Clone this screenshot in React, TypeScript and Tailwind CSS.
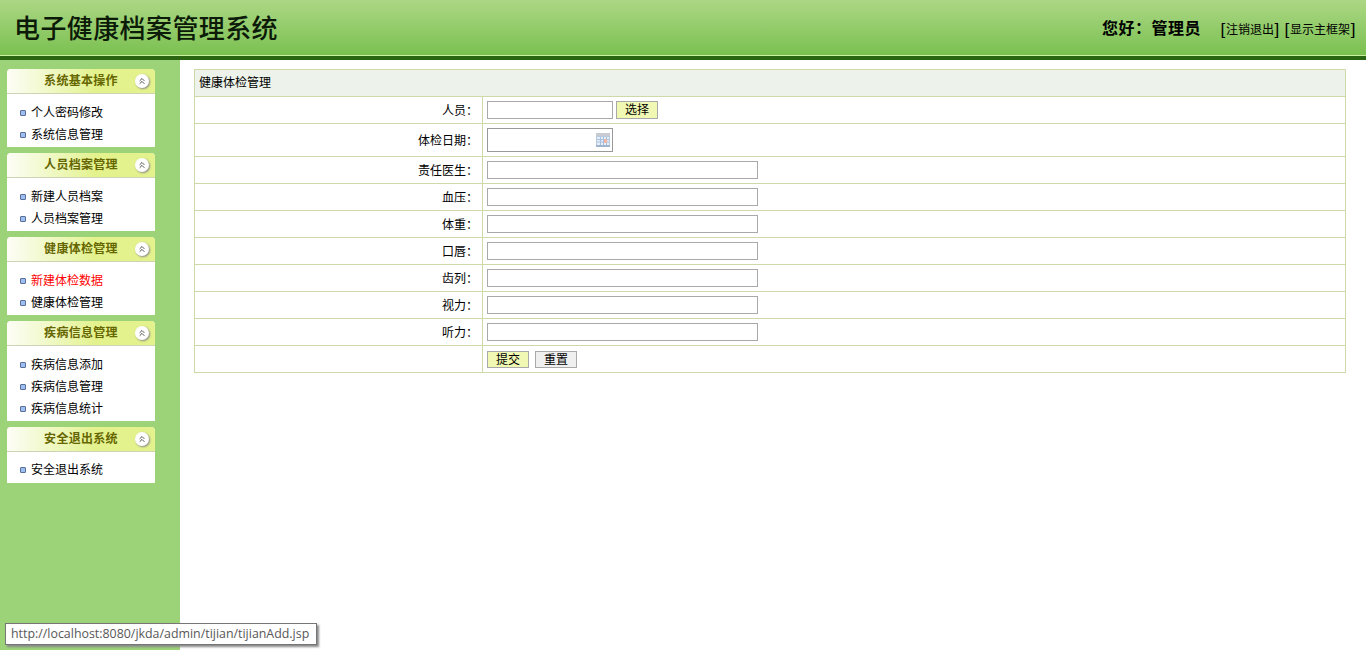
import { ChevronsUp } from 'lucide-react'

const menus = [
  { title: '系统基本操作', items: ['个人密码修改', '系统信息管理'] },
  { title: '人员档案管理', items: ['新建人员档案', '人员档案管理'] },
  { title: '健康体检管理', items: ['新建体检数据', '健康体检管理'] },
  { title: '疾病信息管理', items: ['疾病信息添加', '疾病信息管理', '疾病信息统计'] },
  { title: '安全退出系统', items: ['安全退出系统'], last: true },
]

const textFields = ['责任医生', '血压', '体重', '口唇', '齿列', '视力', '听力']

function CalendarIcon() {
  return (
    <svg width="14" height="14" viewBox="0 0 14 14" className="absolute right-[2px] top-[4px]">
      <rect x="0" y="0" width="14" height="14" fill="#b9c9de" />
      <rect x="0" y="0" width="14" height="3" fill="#c8ccd2" />
      <rect x="1" y="4" width="12" height="8" fill="#e6eefa" />
      <path d="M4.5 4v8M7.5 4v8M10.5 4v8M1 6.5h12M1 9h12" stroke="#a8bfe0" strokeWidth="1" />
      <rect x="8" y="6" width="3" height="4" fill="#eeb4a4" />
      <rect x="0" y="12" width="14" height="2" fill="#9fb4cf" />
    </svg>
  )
}

function Bracket({ children }: { children: string }) {
  return <span className="inline-block w-[6px] text-center text-[17px] leading-[20px] font-light">{children}</span>
}

function MenuPanel({ title, items, last }: { title: string; items: string[]; last?: boolean }) {
  return (
    <div className="w-[148px] bg-white rounded-t-[4px]">
      <div className="relative h-[25px] rounded-t-[4px] border-b border-[#cdd3b5] bg-gradient-to-r from-[#fdfdf6] to-[#e3f28c] to-60% text-center leading-[25px] text-[12px] tracking-[0.3px] font-bold text-[#666600]">
        {title}
        <span className="absolute right-[6px] top-[5px] flex h-[14px] w-[14px] items-center justify-center rounded-full bg-white shadow-[1px_1px_2px_#8a8a8a]">
          <ChevronsUp size={10} strokeWidth={2} className="text-[#333]" />
        </span>
      </div>
      <ul className={last ? 'pt-[7px] pb-[2px]' : 'pt-[8px] pb-[1px]'}>
        {items.map(item => (
          <li key={item} className="flex h-[22px] items-center pl-[13px] text-[12px] text-black">
            <span className="mr-[5px] h-[6px] w-[6px] rounded-[1px] border border-[#5a6f95] bg-[#9dbef0]" />
            <a className={item === '新建体检数据' ? 'text-[#ff0000]' : ''}>{item}</a>
          </li>
        ))}
      </ul>
    </div>
  )
}

function Row({ label, children, h = 'h-[27px]' }: { label: string; children: React.ReactNode; h?: string }) {
  return (
    <tr className={h}>
      <td className="w-[288px] border border-[#cdd9a9] pr-[4px] pt-[1px] text-right align-middle">{label}</td>
      <td className="border border-[#cdd9a9] pl-[4px] align-middle">{children}</td>
    </tr>
  )
}

export default function App() {
  const inputCls = 'block h-[18px] border border-[#a9a9a9] bg-white'
  const btnCls = 'block w-[42px] border border-[#a9a9a9] text-center text-[12px] leading-[16px] text-black'

  return (
    <div className="relative flex h-[650px] flex-col overflow-hidden bg-white font-['Liberation_Sans','Noto_Sans_CJK_SC',sans-serif] text-[12px] text-black">
      {/* 顶部 */}
      <header className="flex h-[60px] items-start justify-between border-b-[4px] border-[#2a6511] bg-gradient-to-b from-[#acd784] to-[#79c04f]">
        <div className="h-[56px] w-full flex items-start justify-between border-b border-[#c9ef9f]">
          <h1 className="pl-[14px] pt-[10px] text-[26px] leading-[38px] tracking-[0.4px] font-medium text-[#0c1a08]">电子健康档案管理系统</h1>
          <div className="flex items-start pt-[19px] pr-[10px]">
            <span className="mr-[19px] text-[16px] leading-[20px] tracking-[0.5px] font-bold">您好：管理员</span>
            <span className="flex pt-[1px] text-[12px] leading-[20px]">
              <Bracket>[</Bracket>注销退出<Bracket>]</Bracket>
              <span className="w-[4px]" />
              <Bracket>[</Bracket>显示主框架<Bracket>]</Bracket>
            </span>
          </div>
        </div>
      </header>

      <div className="flex flex-1">
        {/* 左侧菜单 */}
        <aside className="flex w-[180px] flex-col gap-[6px] bg-[#9cd278] pl-[7px] pt-[9px]">
          {menus.map(m => (
            <MenuPanel key={m.title} title={m.title} items={m.items} last={m.last} />
          ))}
        </aside>

        {/* 表单 */}
        <main className="flex-1 pl-[14px] pr-[20px] pt-[9px]">
          <table className="w-[1152px] border-collapse border border-[#cdd9a9]">
            <tbody>
              <tr className="h-[27px] bg-[#edf3ea]">
                <td colSpan={2} className="border border-[#cdd9a9] pl-[4px] align-middle">健康体检管理</td>
              </tr>
              <Row label="人员：">
                <div className="flex gap-[3px]">
                  <input className={`${inputCls} w-[126px]`} />
                  <button className={`${btnCls} h-[18px] bg-[#f1f8b4]`}>选择</button>
                </div>
              </Row>
              <Row label="体检日期：" h="h-[33px]">
                <div className="relative h-[24px] w-[126px] border border-[#999]">
                  <input className="block h-full w-full bg-white" />
                  <CalendarIcon />
                </div>
              </Row>
              {textFields.map(f => (
                <Row key={f} label={`${f}：`}>
                  <input className={`${inputCls} w-[271px]`} />
                </Row>
              ))}
              <Row label="">
                <div className="flex gap-[6px] pt-[1px]">
                  <button className={`${btnCls} h-[17px] bg-[#f1f8b4]`}>提交</button>
                  <button className={`${btnCls} h-[17px] bg-[#efefef]`}>重置</button>
                </div>
              </Row>
            </tbody>
          </table>
        </main>
      </div>

      {/* 状态提示 */}
      <div className="absolute left-[5px] top-[623px] h-[22px] w-[312px] border border-[#767676] bg-white pl-[5px] font-['Open_Sans',sans-serif] text-[12.4px] leading-[20px] text-[#575757] shadow-[2px_2px_2px_#8a8a8a]">
        http://localhost:8080/jkda/admin/tijian/tijianAdd.jsp
      </div>
    </div>
  )
}
